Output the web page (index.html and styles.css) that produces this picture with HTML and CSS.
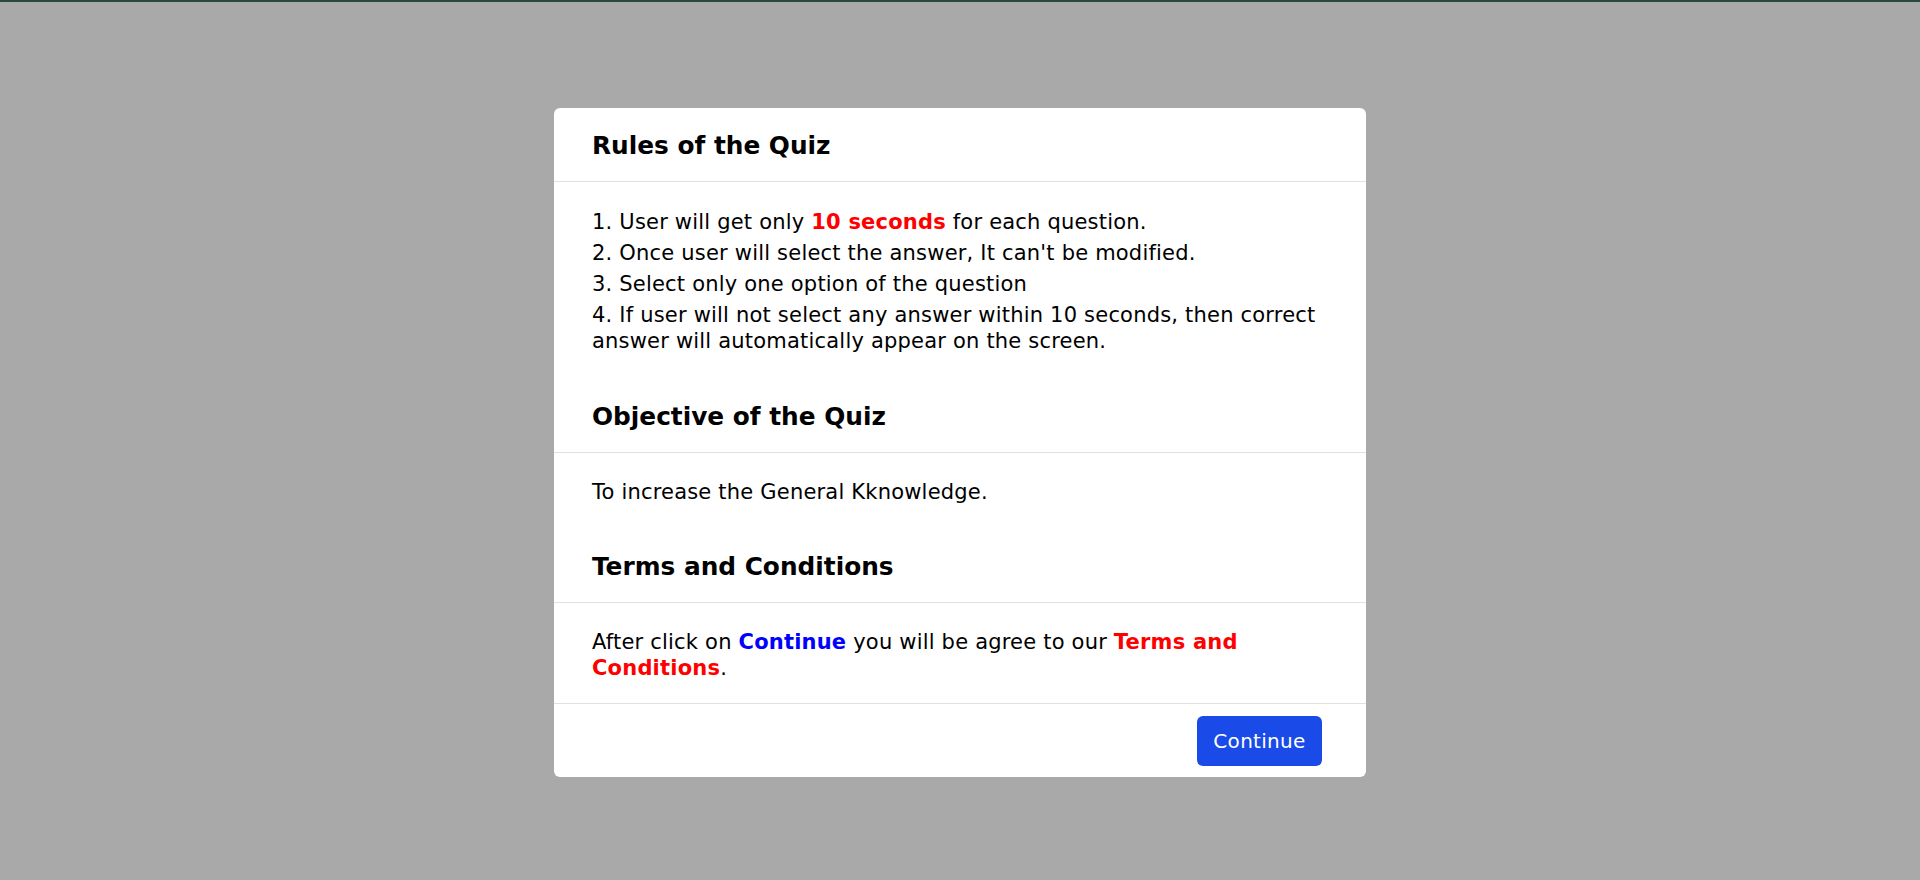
FILE: index.html
```html
<!DOCTYPE html>
<html lang="en">
<head>
<meta charset="utf-8">
<title>Quiz Rules</title>
<link rel="stylesheet" href="styles.css">
</head>
<body>
<div class="topbar"></div>
<div class="overlay">
  <div class="modal">
    <div class="modal-header"><h2 class="modal-title">Rules of the Quiz</h2></div>
    <div class="modal-body">
      <ol class="rules">
        <li>1. User will get only <b class="red">10 seconds</b> for each question.</li>
        <li>2. Once user will select the answer, It can't be modified.</li>
        <li>3. Select only one option of the question</li>
        <li>4. If user will not select any answer within 10 seconds, then correct answer will automatically appear on the screen.</li>
      </ol>
    </div>
    <div class="modal-header"><h2 class="modal-title">Objective of the Quiz</h2></div>
    <div class="modal-body">
      <p class="text">To increase the General Kknowledge.</p>
    </div>
    <div class="modal-header"><h2 class="modal-title">Terms and Conditions</h2></div>
    <div class="modal-body modal-body-last">
      <p class="text">After click on <b class="blue">Continue</b> you will be agree to our <b class="red">Terms and Conditions</b>.</p>
    </div>
    <div class="modal-footer">
      <button class="btn" type="button">Continue</button>
    </div>
  </div>
</div>
</body>
</html>
```

FILE: styles.css
```css
* { box-sizing: border-box; }
html, body { margin: 0; padding: 0; }
body {
  background: #a9a9a9;
  font-family: "DejaVu Sans", Verdana, sans-serif;
  color: #000;
  height: 880px;
  overflow: hidden;
}
.topbar {
  height: 2px;
  background: #2b473d;
}
.overlay {
  display: flex;
  justify-content: center;
  padding-top: 106px;
}
.modal {
  width: 812px;
  background: #fff;
  border-radius: 6px;
  overflow: hidden;
}
.modal-header {
  height: 74px;
  display: flex;
  align-items: center;
  padding: 2px 38px 0;
  border-bottom: 1px solid #dee2e6;
}
.modal-title {
  margin: 0;
  font-size: 24.8px;
  font-weight: bold;
}
.modal-body {
  padding: 26px 38px 24px;
  font-size: 21px;
  letter-spacing: 0.2px;
  line-height: 26px;
}
.modal-body-last {
  padding-bottom: 22px;
}
.rules {
  list-style: none;
  margin: 0;
  padding: 1px 0 1px;
  display: flex;
  flex-direction: column;
  gap: 5px;
}
.text { margin: 0; }
.red { color: #ff0000; }
.blue { color: #0000ff; }
.modal-footer {
  border-top: 1px solid #dee2e6;
  height: 74px;
  display: flex;
  align-items: center;
  justify-content: flex-end;
  padding: 0 44px;
}
.btn {
  background: #1a4ae8;
  color: #fff;
  border: none;
  border-radius: 6px;
  font-family: "DejaVu Sans", Verdana, sans-serif;
  font-size: 20px;
  letter-spacing: 0.3px;
  width: 125px;
  height: 50px;
  padding: 0;
}
```
